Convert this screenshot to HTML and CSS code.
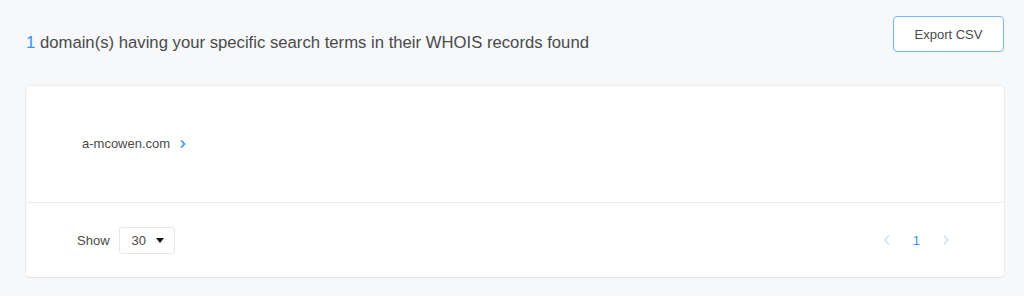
FILE: index.html
```html
<!DOCTYPE html>
<html>
<head>
<meta charset="utf-8">
<link rel="stylesheet" href="styles.css">
</head>
<body>
<div class="page">
  <div class="header">
    <h1 class="title"><span class="count">1</span> domain(s) having your specific search terms in their WHOIS records found</h1>
    <button class="export">Export CSV</button>
  </div>
  <div class="card">
    <div class="list">
      <div class="domain">a-mcowen.com
        <svg class="chev" width="8" height="10" viewBox="0 0 8 10"><path d="M2 1.5 L5.5 5 L2 8.5" fill="none" stroke="#3a8ee6" stroke-width="1.6"/></svg>
      </div>
    </div>
    <div class="footer">
      <div class="show">
        <span class="show-label">Show</span>
        <div class="select"><span>30</span><span class="caret"></span></div>
      </div>
      <div class="pager">
        <svg class="pg-arrow" width="8" height="12" viewBox="0 0 8 12"><path d="M6 1.5 L2 6 L6 10.5" fill="none" stroke="#c8dcf5" stroke-width="1.2"/></svg>
        <span class="pg-num">1</span>
        <svg class="pg-arrow" width="8" height="12" viewBox="0 0 8 12"><path d="M2 1.5 L6 6 L2 10.5" fill="none" stroke="#c8dcf5" stroke-width="1.2"/></svg>
      </div>
    </div>
  </div>
</div>
</body>
</html>
```
FILE: styles.css
```css
* { box-sizing: border-box; }
html, body { margin: 0; padding: 0; }
body {
  background: #f7f8fa;
  font-family: "Liberation Sans", Arial, sans-serif;
  color: #4a4a4a;
  width: 1024px;
  height: 296px;
  overflow: hidden;
}
.page {
  padding: 16px 20px 0 26px;
}
.header {
  display: flex;
  align-items: center;
  justify-content: space-between;
  height: 36px;
}
.title {
  margin: 0;
  margin-top: 17px;
  font-size: 16.7px;
  font-weight: normal;
  color: #4a4a4a;
}
.count { color: #3a8ee6; }
.export {
  width: 111px;
  height: 36px;
  background: #fff;
  border: 1px solid #7ab8f5;
  border-radius: 4px;
  font-family: "Liberation Sans", Arial, sans-serif;
  font-size: 13px;
  color: #4a4a4a;
  padding: 0;
  cursor: pointer;
}
.card {
  margin-top: 34px;
  background: #fff;
  border-radius: 4px;
  box-shadow: 0 0 2px rgba(0,0,0,0.12), 0 1px 2px rgba(0,0,0,0.06);
  height: 191px;
  display: flex;
  flex-direction: column;
}
.list {
  height: 117px;
  border-bottom: 1px solid #ebedf0;
  padding: 50px 0 0 56px;
}
.domain {
  font-size: 13px;
  color: #4a4a4a;
  display: flex;
  align-items: center;
  line-height: 16px;
}
.chev { margin-left: 9px; }
.footer {
  flex: 1;
  display: flex;
  align-items: center;
  justify-content: space-between;
  padding: 0 54px 0 51px;
}
.show {
  display: flex;
  align-items: center;
  font-size: 13px;
}
.show-label { margin-right: 9px; }
.select {
  width: 56px;
  height: 27px;
  border: 1px solid #e4e7eb;
  border-radius: 3px;
  display: flex;
  align-items: center;
  justify-content: space-between;
  padding: 0 10px 0 12px;
  font-size: 13px;
  color: #4a4a4a;
}
.caret {
  width: 0; height: 0;
  border-left: 4px solid transparent;
  border-right: 4px solid transparent;
  border-top: 5px solid #111;
}
.pager {
  display: flex;
  align-items: center;
  gap: 22px;
}
.pg-num {
  font-size: 13px;
  color: #3a8ee6;
}
```
